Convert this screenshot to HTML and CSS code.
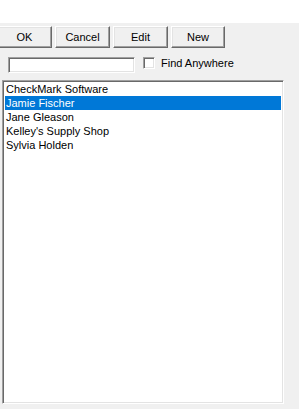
FILE: index.html
```html
<!DOCTYPE html>
<html lang="en">
<head>
    <meta charset="UTF-8">
    <title>Find Customer</title>
    <link rel="stylesheet" href="styles.css">
</head>
<body>
    <div class="top-strip"></div>
    <div class="panel">
        <div class="buttons">
            <button class="btn btn-first">OK</button>
            <button class="btn">Cancel</button>
            <button class="btn">Edit</button>
            <button class="btn btn-new">New</button>
        </div>
        <div class="search-row">
            <input type="text" class="search-box">
            <label class="find-any"><span class="check"></span>Find Anywhere</label>
        </div>
        <div class="list">
            <div class="item">CheckMark Software</div>
            <div class="item selected">Jamie Fischer</div>
            <div class="item">Jane Gleason</div>
            <div class="item">Kelley's Supply Shop</div>
            <div class="item">Sylvia Holden</div>
        </div>
    </div>
</body>
</html>
```

FILE: styles.css
```css
html, body {
    margin: 0;
    padding: 0;
    background: #f0f0f0;
    font-family: "Liberation Sans", Arial, sans-serif;
    font-size: 11px;
    color: #000;
    overflow: hidden;
}
.top-strip {
    height: 23px;
    background: #fff;
}
.panel {
    height: 386px;
    display: flex;
    flex-direction: column;
}
.buttons {
    display: flex;
    gap: 3px;
    margin-top: 3px;
    height: 22px;
}
.btn {
    width: 55px;
    height: 22px;
    padding: 0;
    margin: 0;
    font-family: "Liberation Sans", Arial, sans-serif;
    font-size: 11px;
    color: #000;
    background: #f0f0f0;
    border-style: solid;
    border-width: 1px;
    border-color: #fff #696969 #696969 #fff;
    box-shadow: inset -1px -1px 0 #a0a0a0, inset 1px 1px 0 #e3e3e3;
}
.btn-first {
    margin-left: -3px;
}
.btn-new {
    width: 54px;
}
.search-row {
    display: flex;
    align-items: flex-start;
    margin-top: 9px;
    height: 16px;
}
.search-box {
    box-sizing: border-box;
    width: 127px;
    height: 16px;
    margin: 0 0 0 8px;
    padding: 0;
    background: #fff;
    border-style: solid;
    border-width: 1px;
    border-color: #a0a0a0 #fff #fff #a0a0a0;
    box-shadow: inset 1px 1px 0 #696969, inset -1px -1px 0 #e3e3e3;
    outline: none;
}
.find-any {
    display: flex;
    align-items: center;
    margin-left: 8px;
    height: 12px;
    line-height: 12px;
}
.check {
    box-sizing: border-box;
    width: 12px;
    height: 12px;
    margin-right: 6px;
    background: #fff;
    border-style: solid;
    border-width: 1px;
    border-color: #a0a0a0 #fff #fff #a0a0a0;
    box-shadow: inset 1px 1px 0 #696969, inset -1px -1px 0 #e3e3e3;
}
.list {
    box-sizing: border-box;
    width: 282px;
    height: 324px;
    margin: 7px 0 0 2px;
    background: #fff;
    border-style: solid;
    border-width: 1px;
    border-color: #a0a0a0 #fff #fff #a0a0a0;
    box-shadow: inset 1px 1px 0 #696969, inset -1px -1px 0 #e3e3e3;
    padding: 1px 2px;
}
.item {
    height: 14px;
    line-height: 14px;
    padding-left: 1px;
    white-space: nowrap;
}
.item.selected {
    background: #0078d7;
    color: #fff;
}
```
